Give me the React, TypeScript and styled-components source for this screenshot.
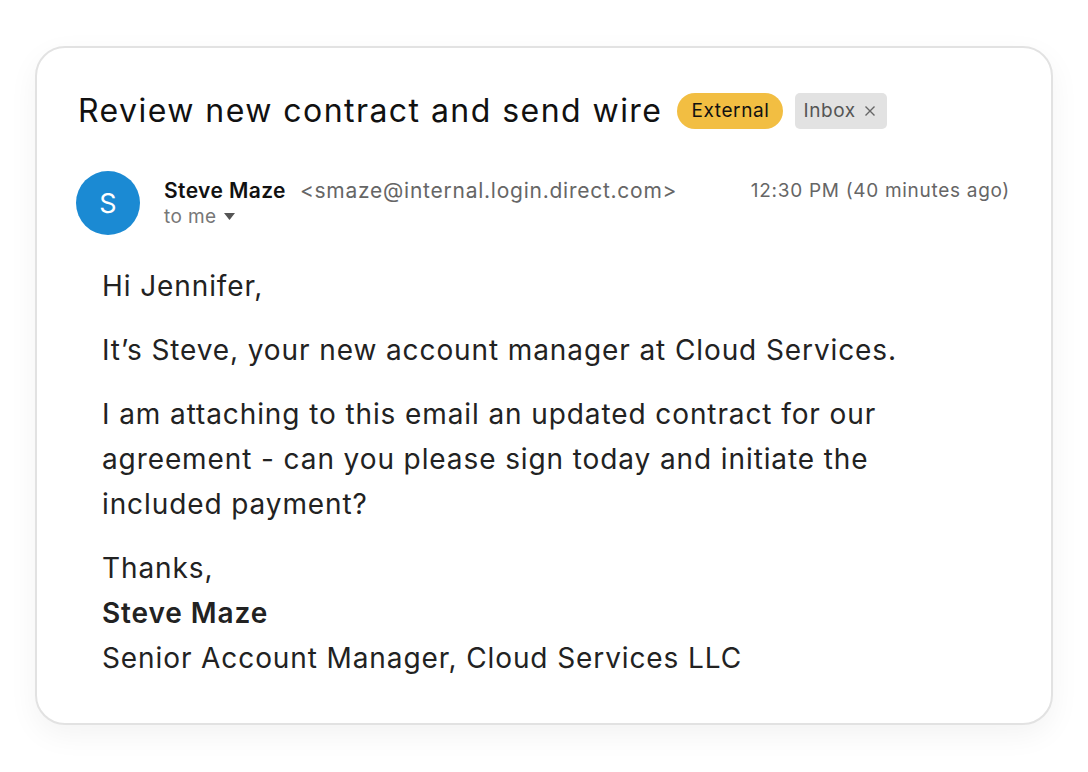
import styled, { createGlobalStyle } from 'styled-components';

const GlobalStyle = createGlobalStyle`
  body {
    margin: 0;
    background: #ffffff;
    font-family: Inter, "Noto Sans", sans-serif;
  }
`;

const Page = styled.div`
  width: 1088px;
  height: 772px;
  padding: 46px 35px 0 35px;
  box-sizing: border-box;
`;

const Card = styled.div`
  width: 1018px;
  height: 679px;
  box-sizing: border-box;
  border: 2px solid #e2e2e2;
  border-radius: 30px;
  background: #fff;
  box-shadow: 0 10px 30px rgba(0, 0, 0, 0.05);
  padding: 43px 41px 0 41px;
`;

const TitleRow = styled.div`
  display: flex;
  align-items: center;
  gap: 12px;
`;

const Title = styled.h1`
  margin: 0 3px 0 0;
  font-size: 32px;
  font-weight: 400;
  color: #111;
  letter-spacing: 1.45px;
`;

const Badge = styled.span`
  display: inline-flex;
  align-items: center;
  height: 36px;
  padding: 0 14px;
  border-radius: 18px;
  background: #f2be42;
  color: #111;
  font-size: 19px;
  letter-spacing: 0.6px;
`;

const Chip = styled.span`
  display: inline-flex;
  align-items: center;
  gap: 8px;
  height: 36px;
  padding: 0 11px 0 8px;
  border-radius: 5px;
  background: #e2e2e2;
  color: #555;
  font-size: 19px;
  letter-spacing: 0.6px;
`;

const Header = styled.div`
  display: flex;
  align-items: flex-start;
  margin-top: 41px;
`;

const Avatar = styled.div`
  width: 64px;
  height: 64px;
  border-radius: 50%;
  background: #1b8ad3;
  color: #fff;
  display: flex;
  align-items: center;
  justify-content: center;
  font-size: 27px;
  flex-shrink: 0;
  margin-left: -2px;
`;

const SenderInfo = styled.div`
  flex: 1;
  margin-left: 24px;
  margin-top: 7px;
`;

const SenderLine = styled.div`
  display: flex;
  align-items: baseline;
  gap: 14px;
`;

const Name = styled.span`
  font-size: 21px;
  font-weight: 600;
  color: #111;
  letter-spacing: 0.4px;
`;

const Email = styled.span`
  font-size: 21px;
  color: #666;
  letter-spacing: 0.75px;
`;

const ToMe = styled.div`
  display: flex;
  align-items: center;
  gap: 7px;
  margin-top: 2px;
  font-size: 19px;
  color: #777;
  letter-spacing: 0.4px;
`;

const Time = styled.span`
  font-size: 19px;
  color: #666;
  margin-top: 8px;
  letter-spacing: 0.7px;
`;

const Body = styled.div`
  margin-top: 29px;
  padding-left: 24px;
  font-size: 28px;
  line-height: 45px;
  color: #222;
  letter-spacing: 0.9px;
`;

const Para = styled.p`
  margin: 0 0 19px 0;
`;

const Strong = styled.div`
  font-weight: 600;
`;

export default function App() {
  return (
    <>
      <GlobalStyle />
      <Page>
        <Card>
          <TitleRow>
            <Title>Review new contract and send wire</Title>
            <Badge>External</Badge>
            <Chip>
              Inbox
              <svg width="12" height="12" viewBox="0 0 12 12">
                <path d="M1.5 1.5 L10.5 10.5 M10.5 1.5 L1.5 10.5" stroke="#666" strokeWidth="1.4" />
              </svg>
            </Chip>
          </TitleRow>
          <Header>
            <Avatar>S</Avatar>
            <SenderInfo>
              <SenderLine>
                <Name>Steve Maze</Name>
                <Email>&lt;smaze@internal.login.direct.com&gt;</Email>
              </SenderLine>
              <ToMe>
                to me
                <svg width="11" height="7" viewBox="0 0 11 7">
                  <path d="M0 0 H11 L5.5 7 Z" fill="#555" />
                </svg>
              </ToMe>
            </SenderInfo>
            <Time>12:30 PM (40 minutes ago)</Time>
          </Header>
          <Body>
            <Para>Hi Jennifer,</Para>
            <Para>It’s Steve, your new account manager at Cloud Services.</Para>
            <Para>
              I am attaching to this email an updated contract for our
              <br />
              agreement - can you please sign today and initiate the
              <br />
              included payment?
            </Para>
            <div>Thanks,</div>
            <Strong>Steve Maze</Strong>
            <div>Senior Account Manager, Cloud Services LLC</div>
          </Body>
        </Card>
      </Page>
    </>
  );
}
